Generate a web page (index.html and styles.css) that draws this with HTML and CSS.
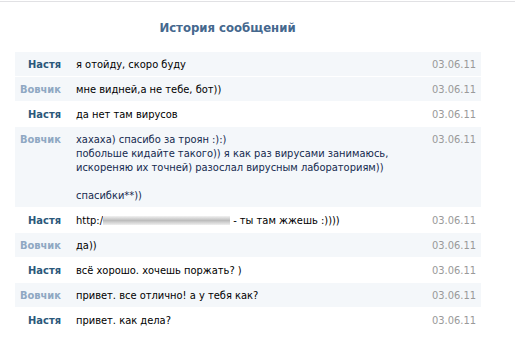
FILE: index.html
```html
<!DOCTYPE html>
<html lang="ru">

<head>
    <meta charset="UTF-8">
    <title>История сообщений</title>
    <link rel="stylesheet" href="styles.css">
</head>

<body>
    <div class="page">
        <h2 class="title">История сообщений</h2>

        <div class="history">
            <div class="row shaded">
                <div class="author me">Настя</div>
                <div class="text">я отойду, скоро буду</div>
                <div class="date">03.06.11</div>
            </div>
            <div class="row shaded">
                <div class="author">Вовчик</div>
                <div class="text">мне видней,а не тебе, бот))</div>
                <div class="date">03.06.11</div>
            </div>
            <div class="row">
                <div class="author me">Настя</div>
                <div class="text">да нет там вирусов</div>
                <div class="date">03.06.11</div>
            </div>
            <div class="row shaded">
                <div class="author">Вовчик</div>
                <div class="text unread">хахаха) спасибо за троян :):)<br>побольше кидайте такого)) я как раз вирусами занимаюсь,<br>искореняю их точней) разослал вирусным лабораториям))<br><br>спасибки**))</div>
                <div class="date">03.06.11</div>
            </div>
            <div class="row">
                <div class="author me">Настя</div>
                <div class="text">http:/<span class="blur"></span> - ты там жжешь :))))</div>
                <div class="date">03.06.11</div>
            </div>
            <div class="row shaded">
                <div class="author">Вовчик</div>
                <div class="text">да))</div>
                <div class="date">03.06.11</div>
            </div>
            <div class="row">
                <div class="author me">Настя</div>
                <div class="text">всё хорошо. хочешь поржать? )</div>
                <div class="date">03.06.11</div>
            </div>
            <div class="row shaded">
                <div class="author">Вовчик</div>
                <div class="text">привет. все отлично! а у тебя как?</div>
                <div class="date">03.06.11</div>
            </div>
            <div class="row">
                <div class="author me">Настя</div>
                <div class="text">привет. как дела?</div>
                <div class="date">03.06.11</div>
            </div>
        </div>
    </div>
</body>

</html>
```

FILE: styles.css
```css
body {
    font-family: "DejaVu Sans Condensed", "DejaVu Sans", sans-serif;
    font-size: 11px;
    margin: 0;
    padding-top: 1px;
    background-color: #fff;
    color: #000;
}

.page {
    border-top: 1px solid #e1e1e4;
}

.title {
    width: 455px;
    margin: 0;
    padding: 18px 0 16px;
    text-align: center;
    font-size: 13px;
    line-height: 16px;
    color: #45688e;
}

.history {
    width: 466px;
    margin-left: 15px;
}

.row {
    display: grid;
    grid-template-columns: 46px 1fr auto;
    column-gap: 15px;
    padding: 6px 5px 4px 0;
    line-height: 14px;
    border-bottom: 1px solid #fff;
}

.shaded {
    background-color: #f4f7fa;
}

.author {
    text-align: right;
    font-weight: bold;
    color: #8fa8c3;
}

.author.me {
    color: #2b587a;
}

.text.unread {
    color: #142a4f;
}

.date {
    color: #999;
}

.blur {
    display: inline-block;
    width: 127px;
    height: 9px;
    vertical-align: -1px;
    background: linear-gradient(to bottom, #f2f2f2, #bdbdbd 50%, #efefef);
}
```
